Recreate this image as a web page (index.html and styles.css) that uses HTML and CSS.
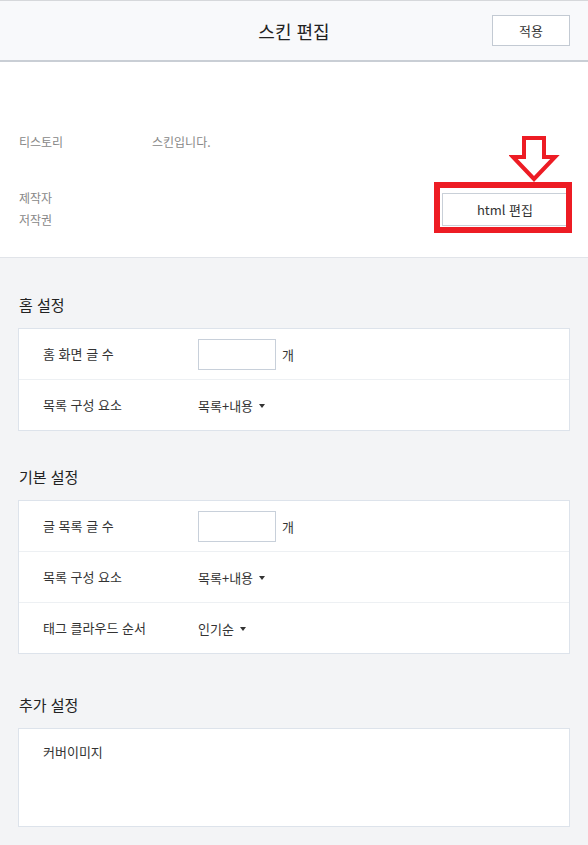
FILE: index.html
```html
<!DOCTYPE html>
<html lang="ko">
<head>
<meta charset="utf-8">
<title>스킨 편집</title>
<link rel="stylesheet" href="styles.css">
</head>
<body>
<header class="topbar">
  <h1 class="title">스킨 편집</h1>
  <button class="btn apply">적용</button>
</header>

<section class="info">
  <div class="info-line">
    <span class="info-name">티스토리</span>
    <span>스킨입니다.</span>
  </div>
  <div class="info-bottom">
    <div class="meta">
      <div>제작자</div>
      <div>저작권</div>
    </div>
    <button class="btn html-btn">html 편집</button>
  </div>
  <svg class="arrow" width="52" height="52" viewBox="0 0 52 52">
    <path d="M15 4 H35 V23 H46 L25 45 L4 23 H15 Z" fill="none" stroke="#ed1c24" stroke-width="4" stroke-linejoin="miter"/>
  </svg>
  <div class="highlight"></div>
</section>

<main class="settings">
  <div class="group">
    <h2 class="group-title">홈 설정</h2>
    <div class="card">
      <div class="row">
        <div class="label">홈 화면 글 수</div>
        <div class="value"><span class="num-input"></span><span class="unit">개</span></div>
      </div>
      <div class="row">
        <div class="label">목록 구성 요소</div>
        <div class="value"><span class="select">목록+내용</span><span class="caret"></span></div>
      </div>
    </div>
  </div>

  <div class="group group-basic">
    <h2 class="group-title">기본 설정</h2>
    <div class="card">
      <div class="row">
        <div class="label">글 목록 글 수</div>
        <div class="value"><span class="num-input"></span><span class="unit">개</span></div>
      </div>
      <div class="row">
        <div class="label">목록 구성 요소</div>
        <div class="value"><span class="select">목록+내용</span><span class="caret"></span></div>
      </div>
      <div class="row">
        <div class="label">태그 클라우드 순서</div>
        <div class="value"><span class="select">인기순</span><span class="caret"></span></div>
      </div>
    </div>
  </div>

  <div class="group group-extra">
    <h2 class="group-title">추가 설정</h2>
    <div class="card card-extra">
      <div class="label">커버이미지</div>
    </div>
  </div>
</main>
</body>
</html>
```

FILE: styles.css
```css
* { box-sizing: border-box; }

html, body {
  margin: 0;
  padding: 0;
}

body {
  background: #f3f4f6;
  font-family: "Noto Sans CJK KR", "Noto Sans", sans-serif;
  color: #333;
  width: 588px;
  height: 845px;
  overflow: hidden;
}

.topbar {
  position: relative;
  height: 62px;
  background: #f8f9fb;
  border-top: 1px solid #d6d8db;
  border-bottom: 2px solid #c9ced5;
  display: flex;
  align-items: center;
  justify-content: center;
}

.title {
  margin: 0;
  font-size: 18px;
  font-weight: 400;
  color: #222;
  line-height: 24px;
}

.btn {
  font-family: inherit;
  background: #fff;
  border: 1px solid #c6cdd6;
  color: #333;
  font-size: 13px;
  padding: 0;
  margin: 0;
  cursor: pointer;
}

.apply {
  position: absolute;
  right: 18px;
  top: 14px;
  width: 78px;
  height: 31px;
  border-color: #c3cad3;
}

.info {
  position: relative;
  height: 196px;
  background: #fff;
  border-bottom: 1px solid #e1e4e9;
  padding: 70px 20px 0 19px;
  font-size: 12px;
  color: #888;
}

.info-line {
  display: flex;
  line-height: 20px;
}

.info-name {
  width: 133px;
}

.info-bottom {
  display: flex;
  justify-content: space-between;
  margin-top: 35px;
}

.meta {
  line-height: 22px;
}

.html-btn {
  width: 126px;
  height: 33px;
  margin-top: 6px;
  border-color: #c9d0d8;
}

.arrow {
  position: absolute;
  left: 509px;
  top: 72px;
}

.highlight {
  position: absolute;
  left: 434px;
  top: 120px;
  width: 138px;
  height: 51px;
  border: 6px solid #ed1c24;
}

.settings {
  padding: 36px 18px 0 18px;
}

.group-basic {
  margin-top: 35px;
}

.group-extra {
  margin-top: 40px;
}

.group-title {
  margin: 0 0 12px 1px;
  font-size: 15px;
  font-weight: 400;
  color: #222;
  line-height: 22px;
}

.card {
  background: #fff;
  border: 1px solid #dde3eb;
}

.row {
  display: grid;
  grid-template-columns: 155px 1fr;
  align-items: center;
  height: 51px;
  padding-left: 24px;
  border-top: 1px solid #edf0f3;
  font-size: 13px;
}

.row:first-child {
  height: 50px;
  border-top: none;
}

.label {
  color: #333;
  font-size: 13px;
  line-height: 20px;
}

.value {
  display: flex;
  align-items: center;
  color: #333;
}

.num-input {
  display: block;
  width: 78px;
  height: 31px;
  border: 1px solid #c8d0da;
  background: #fff;
}

.unit {
  margin-left: 6px;
}

.caret {
  width: 0;
  height: 0;
  margin-left: 6px;
  margin-top: 1px;
  border-left: 3.5px solid transparent;
  border-right: 3.5px solid transparent;
  border-top: 4px solid #333;
}

.card-extra {
  height: 99px;
  padding: 13px 24px 0 24px;
}
```
